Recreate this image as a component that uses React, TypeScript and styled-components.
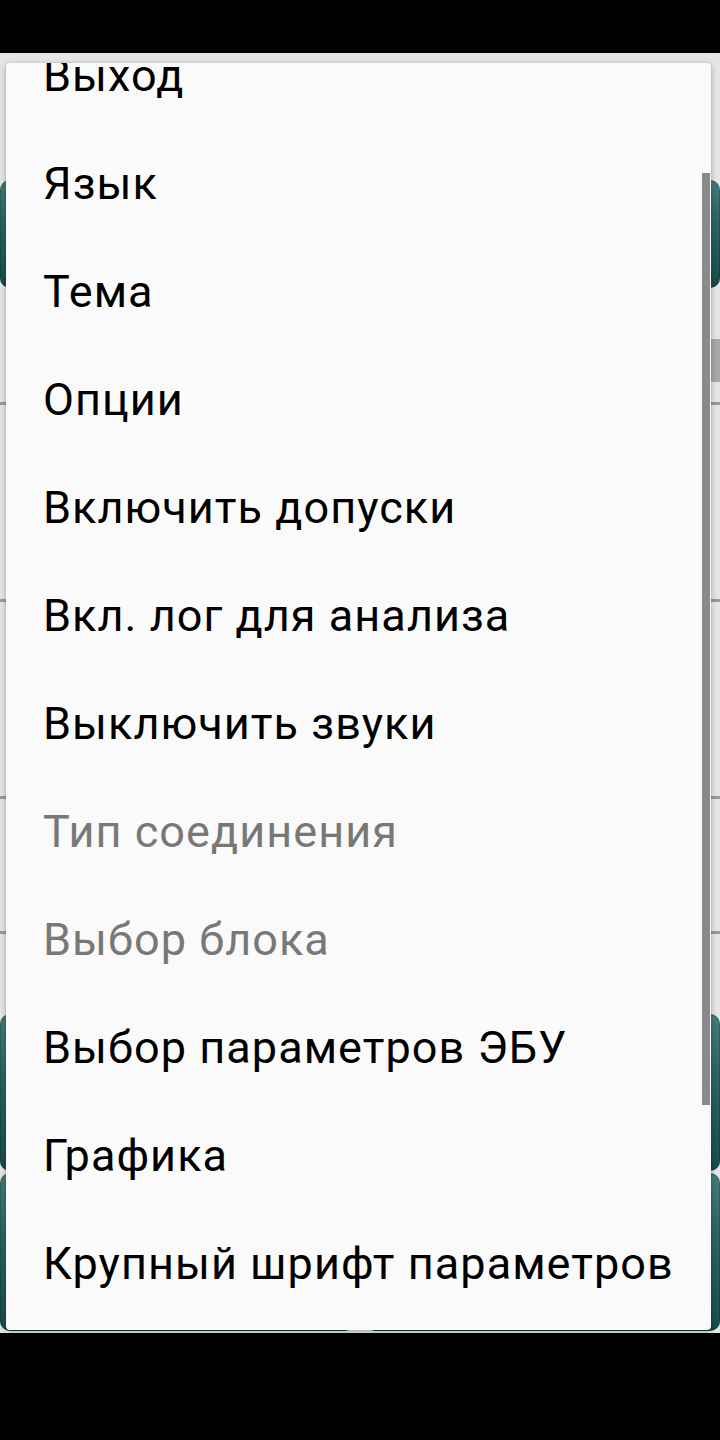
import styled, { createGlobalStyle } from 'styled-components';

const GlobalStyle = createGlobalStyle`
  html, body {
    margin: 0;
    padding: 0;
    background: #000;
  }
  body {
    font-family: Roboto, "Noto Sans", "Liberation Sans", sans-serif;
  }
`;

const Device = styled.div`
  width: 720px;
  height: 1440px;
  display: flex;
  flex-direction: column;
  background: #000;
  overflow: hidden;
`;

const StatusBar = styled.div`
  height: 53px;
  flex: none;
  background: #000;
`;

const Screen = styled.div`
  position: relative;
  height: 1280px;
  flex: none;
  background: #e5e5e5;
  display: flex;
  flex-direction: column;
  overflow: hidden;
`;

const NavBar = styled.div`
  flex: 1;
  background: #000;
`;

const Gap = styled.div<{ $h: number }>`
  height: ${({ $h }) => $h}px;
  flex: none;
`;

const ButtonRow = styled.div<{ $h: number }>`
  height: ${({ $h }) => $h}px;
  flex: none;
  display: flex;
  justify-content: space-between;
  gap: 10px;
`;

const TealButton = styled.div`
  flex: 1;
  border-radius: 10px;
  background: linear-gradient(180deg, #437c7a 0%, #2b6563 40%, #174c4c 100%);
  box-shadow: inset 0 0 0 1px rgba(0, 0, 0, 0.2);
`;

const BarRow = styled.div`
  height: 43px;
  flex: none;
  display: flex;
  justify-content: flex-end;
`;

const GrayBar = styled.div`
  width: 260px;
  background: #a8a8a8;
`;

const Divider = styled.div`
  height: 3px;
  flex: none;
  background: #9a9a9a;
`;

const Popup = styled.div`
  position: absolute;
  left: 6px;
  top: 10px;
  width: 705px;
  height: 1267px;
  background: #fafafa;
  border-radius: 4px;
  box-shadow: 0 2px 6px rgba(0, 0, 0, 0.25), 0 0 2px rgba(0, 0, 0, 0.15);
  overflow: hidden;
`;

const List = styled.ul`
  list-style: none;
  margin: -41px 0 0;
  padding: 0;
`;

const Item = styled.li<{ $disabled?: boolean }>`
  height: 108px;
  line-height: 108px;
  padding-left: 37px;
  font-size: 45px;
  letter-spacing: 1.05px;
  white-space: nowrap;
  color: ${({ $disabled }) => ($disabled ? '#787878' : '#000')};
`;

const Scrollbar = styled.div`
  position: absolute;
  right: 1px;
  top: 110px;
  width: 8px;
  height: 932px;
  background: #8a8a8a;
`;

const items: { label: string; disabled?: boolean }[] = [
  { label: 'Выход' },
  { label: 'Язык' },
  { label: 'Тема' },
  { label: 'Опции' },
  { label: 'Включить допуски' },
  { label: 'Вкл. лог для анализа' },
  { label: 'Выключить звуки' },
  { label: 'Тип соединения', disabled: true },
  { label: 'Выбор блока', disabled: true },
  { label: 'Выбор параметров ЭБУ' },
  { label: 'Графика' },
  { label: 'Крупный шрифт параметров' },
];

export default function App() {
  return (
    <Device>
      <GlobalStyle />
      <StatusBar />
      <Screen>
        <Gap $h={127} />
        <ButtonRow $h={108}>
          <TealButton />
          <TealButton />
        </ButtonRow>
        <Gap $h={51} />
        <BarRow>
          <GrayBar />
        </BarRow>
        <Gap $h={20} />
        <Divider />
        <Gap $h={194} />
        <Divider />
        <Gap $h={194} />
        <Divider />
        <Gap $h={132} />
        <Divider />
        <Gap $h={80} />
        <ButtonRow $h={157}>
          <TealButton />
          <TealButton />
        </ButtonRow>
        <Gap $h={2} />
        <ButtonRow $h={158}>
          <TealButton />
          <TealButton />
        </ButtonRow>

        <Popup>
          <List>
            {items.map((it) => (
              <Item key={it.label} $disabled={it.disabled}>
                {it.label}
              </Item>
            ))}
          </List>
          <Scrollbar />
        </Popup>
      </Screen>
      <NavBar />
    </Device>
  );
}
